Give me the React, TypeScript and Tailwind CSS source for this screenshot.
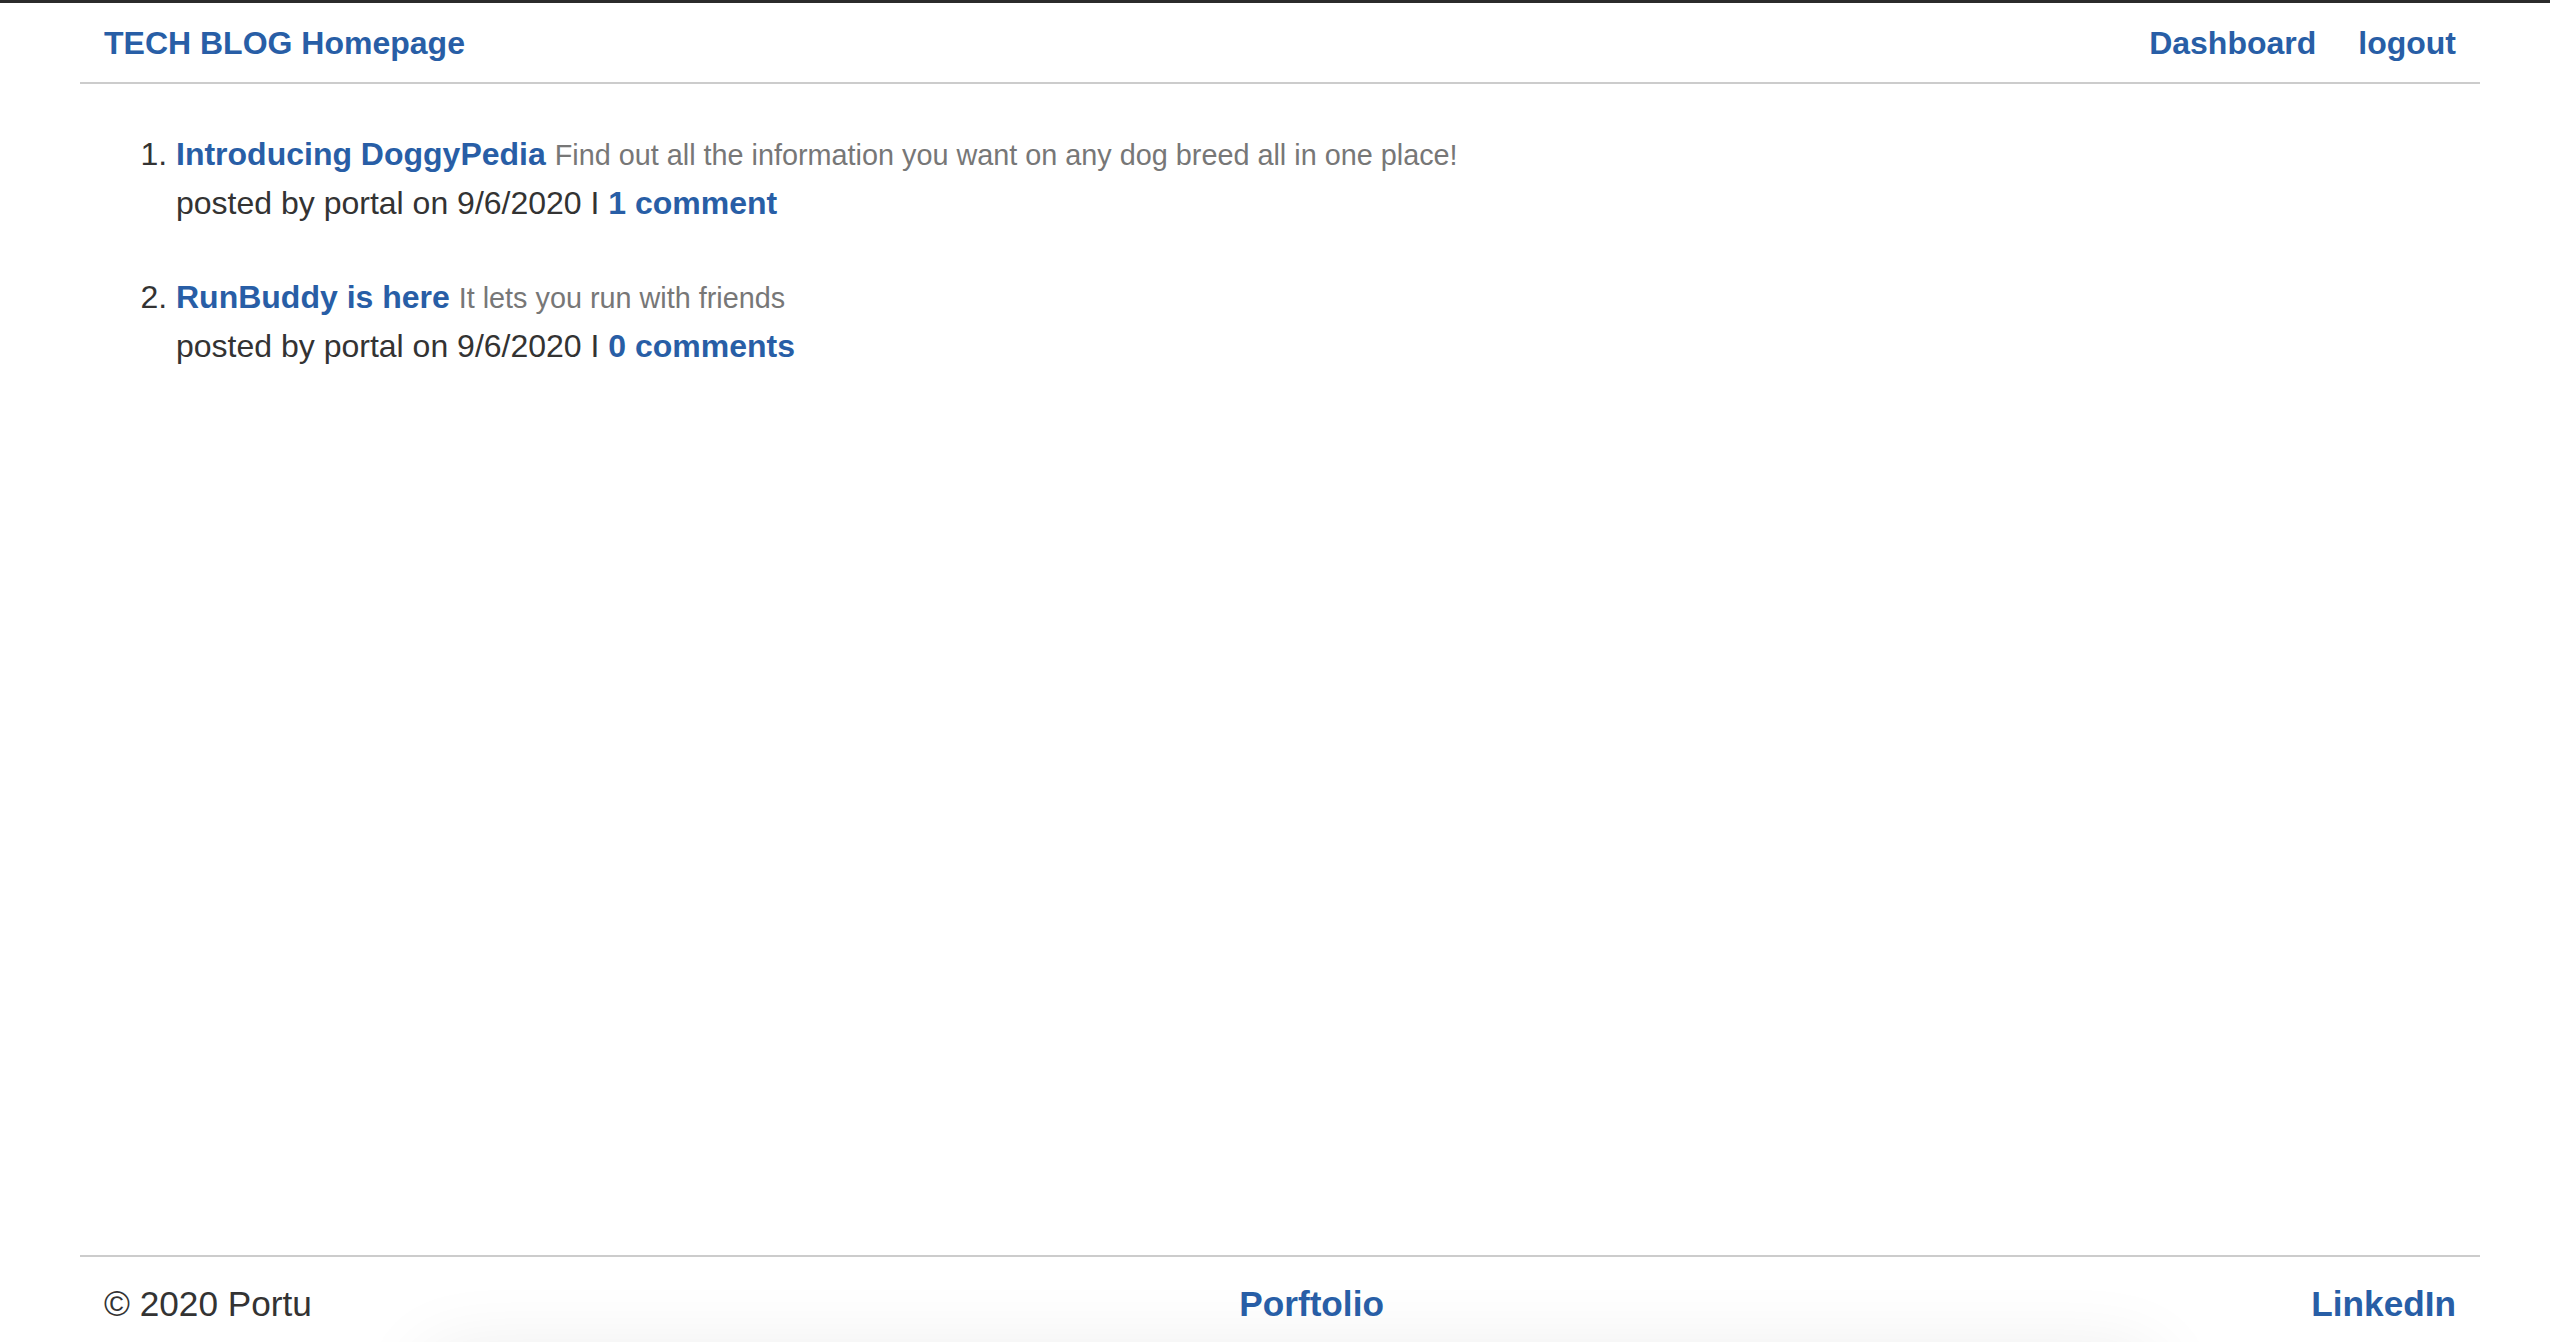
import React from 'react';

interface Post {
    id: number;
    title: string;
    description: string;
    author: string;
    date: string;
    comments: number;
}

const posts: Post[] = [
    {
        id: 1,
        title: 'Introducing DoggyPedia',
        description: 'Find out all the information you want on any dog breed all in one place!',
        author: 'portal',
        date: '9/6/2020',
        comments: 1,
    },
    {
        id: 2,
        title: 'RunBuddy is here',
        description: 'It lets you run with friends',
        author: 'portal',
        date: '9/6/2020',
        comments: 0,
    },
];

const linkClass = 'font-bold text-[#285ea6] hover:underline';

const App: React.FC = () => {
    return (
        <div
            className="h-screen overflow-hidden flex flex-col bg-white text-[#333333]"
            style={{ fontFamily: '"Liberation Sans", Arial, Helvetica, sans-serif' }}
        >
            {/* window edge */}
            <div className="h-[3px] bg-[#2b2b2b] shrink-0" />

            {/* Header */}
            <header className="ml-[80px] w-[2400px] px-[24px] pt-[16px] pb-[15px] border-b-2 border-[#cccccc] flex items-center justify-between shrink-0">
                <a href="#" className={`${linkClass} text-[32px] leading-[48px]`}>TECH BLOG Homepage</a>
                <nav className="flex items-center gap-[42px] text-[32px] leading-[48px]">
                    <a href="#" className={linkClass}>Dashboard</a>
                    <a href="#" className={linkClass}>logout</a>
                </nav>
            </header>

            {/* Posts */}
            <main className="flex-1 ml-[80px] w-[2400px] px-[24px] pt-[46px]">
                <ol className="list-decimal pl-[72px] text-[32px] leading-[48px]">
                    {posts.map(post => (
                        <li key={post.id} className="mb-[46px]">
                            <a href="#" className={linkClass}>{post.title}</a>{' '}
                            <span className="text-[28.8px] text-[#777777]">{post.description}</span>
                            <div>
                                posted by {post.author} on {post.date} I{' '}
                                <a href="#" className={linkClass}>
                                    {post.comments} {post.comments === 1 ? 'comment' : 'comments'}
                                </a>
                            </div>
                        </li>
                    ))}
                </ol>
            </main>

            {/* Footer */}
            <footer className="relative ml-[80px] w-[2400px] px-[24px] pt-[20px] pb-[12px] border-t-2 border-[#cccccc] flex items-center justify-between text-[35.2px] leading-[53px] shrink-0">
                {/* soft shadow coming up from below the fold */}
                <div className="pointer-events-none absolute left-[360px] w-[1700px] top-[110px] h-[120px] bg-white shadow-[0_0_80px_12px_rgba(0,0,0,0.09)]" />
                <span className="relative">© 2020 Portu</span>
                <a href="#" className={`relative ${linkClass}`}>Porftolio</a>
                <a href="#" className={`relative ${linkClass}`}>LinkedIn</a>
            </footer>
        </div>
    );
};

export default App;
